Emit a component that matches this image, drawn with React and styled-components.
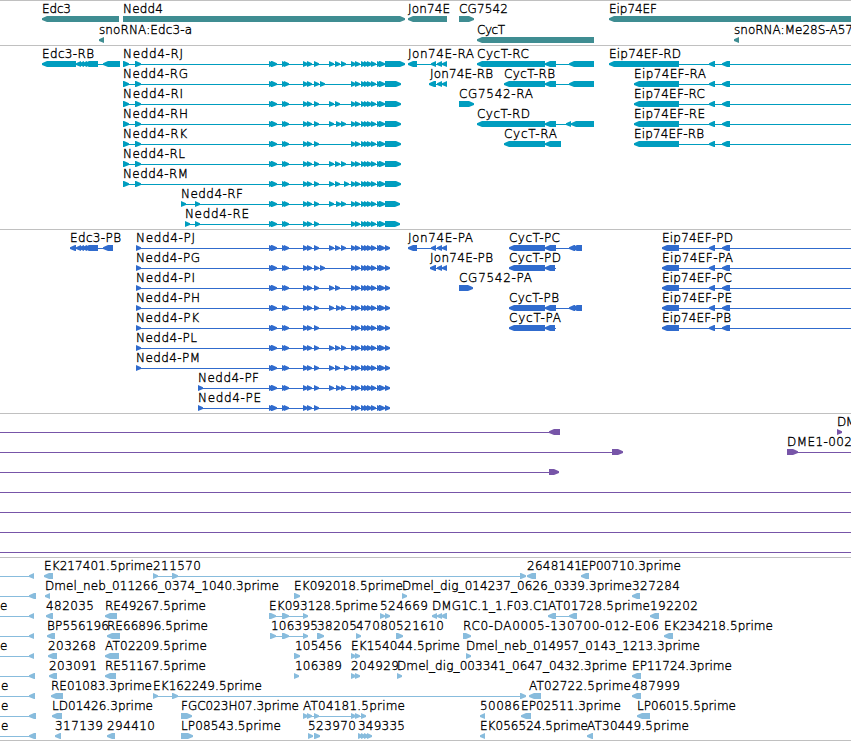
import styled, { createGlobalStyle } from "styled-components";

const GlobalStyle = createGlobalStyle`
  body {
    margin: 0;
    background: #fff;
    overflow: hidden;
  }
`;

// Whole browser view
const Viewer = styled.main`
  display: flex;
  flex-direction: column;
  width: 851px;
  height: 741px;
  overflow: hidden;
  background: #fff;
`;

// One annotation track
const Track = styled.section`
  box-sizing: border-box;
  flex: none;
  height: ${({ $height }) => $height}px;
  padding-top: 3px;
  border-top: 1px solid #c0c0c0;
  border-bottom: ${({ $last }) => ($last ? "1px solid #c0c0c0" : "none")};
  color: ${({ $color }) => $color};
`;

// One row of features inside a track
const Row = styled.svg`
  display: block;
  width: 851px;
  height: ${({ $pitch }) => $pitch}px;
  overflow: visible;
  fill: currentColor;
`;

const Label = styled.text`
  font-family: "DejaVu Sans", sans-serif;
  font-size: 12px;
  font-weight: 200;
  fill: #000;
  stroke: #000;
  stroke-width: 0.35px;
`;

const TOP = 12;
const HEAD = 5;

// Block with a pointed end, drawn in the strand's direction
const Exon = ({ from, to, left }) => {
  const head = Math.min(HEAD, to - from);
  const tipTop = TOP + 2.3;
  const tipEnd = TOP + 3.9;
  const end = TOP + 6;
  const points = left
    ? `${from},${tipTop} ${from + head},${TOP} ${to},${TOP} ${to},${end} ${from + head},${end} ${from},${tipEnd}`
    : `${to},${tipTop} ${to - head},${TOP} ${from},${TOP} ${from},${end} ${to - head},${end} ${to},${tipEnd}`;
  return <polygon points={points} />;
};

// Feature: [label, x, labelEnd, exons, strand, line]
const Feature = ({ data }) => {
  const [label, x, labelEnd, exons, strand, line] = data;
  return (
    <g>
      {line && (
        <rect x={line[0]} y={TOP + 3} width={line[1] - line[0]} height="1" shapeRendering="crispEdges" />
      )}
      {exons.map(([from, to]) => (
        <Exon key={from} from={from} to={to} left={strand === "-"} />
      ))}
      {label && (
        <Label x={x} y="9" textLength={labelEnd - x} lengthAdjust="spacing">
          {label}
        </Label>
      )}
    </g>
  );
};

// Exons shared by every Nedd4 isoform
const head = [[269, 274], [271, 277], [282, 287], [284, 289], [303, 308], [307, 312], [314, 319]];
const tail = [[351, 356], [355, 360], [361, 366], [364, 369], [367, 372], [371, 376], [377, 382], [379, 385]];

const nedd = (label, x, labelEnd, first, middle, last) => [
  label,
  x,
  labelEnd,
  [...first, ...head, ...middle.map((m) => [m, m + 5]), ...tail, [385, last]],
  "+",
  [x, last],
];

const rFirst = [[123, 129], [135, 141]];
const pFirst = [[136, 141]];
const jonTail = [[437, 442], [442, 447]];
const eipTail = [[709, 715], [722, 730]];

const genes = [
  [
    ["Edc3", 42, 71, [[42, 119]], "-"],
    ["Nedd4", 123, 163, [[123, 405]], "+"],
    ["Jon74E", 408, 450, [[408, 447]], "-"],
    ["CG7542", 459, 508, [[459, 474]], "+"],
    ["Eip74EF", 609, 657, [[609, 860]], "-"],
  ],
  [
    ["snoRNA:Edc3-a", 99, 192, [[99, 104]], "-"],
    ["CycT", 477, 505, [[477, 594]], "-"],
    ["snoRNA:Me28S-A57", 734, 853, [[734, 739]], "-"],
  ],
];

const transcripts = [
  [
    ["Edc3-RB", 42, 94, [[42, 76], [76, 81], [79, 84], [82, 87], [84, 98], [103, 120]], "-", [76, 104]],
    nedd("Nedd4-RJ", 123, 183, rFirst, [329, 335, 341], 405),
    ["Jon74E-RA", 408, 474, [[408, 417], [431, 436], ...jonTail], "-", [417, 447]],
    ["CycT-RC", 477, 529, [[477, 545], [545, 556], [569, 594]], "-", [556, 570]],
    ["Eip74EF-RD", 609, 681, [[609, 679], ...eipTail], "-", [679, 851]],
  ],
  [
    nedd("Nedd4-RG", 123, 188, rFirst, [320], 401),
    ["Jon74E-RB", 430, 493, [[429, 436], ...jonTail], "-", [429, 447]],
    ["CycT-RB", 504, 555, [[504, 545], [545, 556], [569, 594]], "-", [556, 570]],
    ["Eip74EF-RA", 634, 706, [[634, 679], ...eipTail], "-", [679, 851]],
  ],
  [
    nedd("Nedd4-RI", 123, 183, rFirst, [329, 335], 401),
    ["CG7542-RA", 459, 533, [[459, 474]], "+"],
    ["Eip74EF-RC", 634, 705, [[634, 679], ...eipTail], "-", [679, 851]],
  ],
  [
    nedd("Nedd4-RH", 123, 188, rFirst, [329, 336, 341], 401),
    ["CycT-RD", 477, 530, [[477, 545], [545, 556], [566, 571], [571, 594]], "-", [556, 572]],
    ["Eip74EF-RE", 634, 705, [[634, 679], ...eipTail], "-", [679, 851]],
  ],
  [
    nedd("Nedd4-RK", 123, 187, rFirst, [], 401),
    ["CycT-RA", 504, 557, [[504, 545], [545, 561]], "-"],
    ["Eip74EF-RB", 634, 704, [[634, 679], ...eipTail], "-", [679, 851]],
  ],
  [nedd("Nedd4-RL", 123, 185, rFirst, [329, 335, 341], 401)],
  [nedd("Nedd4-RM", 123, 188, rFirst, [329, 335, 344], 401)],
  [nedd("Nedd4-RF", 181, 243, [[181, 186], [195, 200]], [329, 336, 341], 400)],
  [nedd("Nedd4-RE", 185, 249, [[185, 190], [195, 200]], [], 400)],
];

const proteins = [
  [
    ["Edc3-PB", 70, 121, [[70, 76], [76, 81], [79, 84], [82, 87], [84, 98], [103, 113]], "-", [70, 104]],
    nedd("Nedd4-PJ", 136, 195, pFirst, [329, 335, 341], 390),
    ["Jon74E-PA", 408, 473, [[408, 417], [431, 436], ...jonTail], "-", [417, 447]],
    ["CycT-PC", 509, 560, [[509, 545], [545, 556], [569, 575], [572, 582]], "-", [556, 570]],
    ["Eip74EF-PD", 662, 733, [[662, 679], ...eipTail], "-", [679, 851]],
  ],
  [
    nedd("Nedd4-PG", 136, 200, pFirst, [320], 390),
    ["Jon74E-PB", 430, 493, [[430, 436], ...jonTail], "-", [430, 447]],
    ["CycT-PD", 509, 561, [[509, 545], [545, 555]], "-", [555, 556]],
    ["Eip74EF-PA", 662, 733, [[662, 679], ...eipTail], "-", [679, 851]],
  ],
  [
    nedd("Nedd4-PI", 136, 195, pFirst, [329, 335], 390),
    ["CG7542-PA", 459, 532, [[459, 473]], "+"],
    ["Eip74EF-PC", 662, 732, [[662, 679], ...eipTail], "-", [679, 851]],
  ],
  [
    nedd("Nedd4-PH", 136, 200, pFirst, [329, 336, 341], 390),
    ["CycT-PB", 509, 559, [[509, 545], [545, 556], [569, 575], [572, 582]], "-", [556, 570]],
    ["Eip74EF-PE", 662, 732, [[662, 679], ...eipTail], "-", [679, 851]],
  ],
  [
    nedd("Nedd4-PK", 136, 199, pFirst, [], 390),
    ["CycT-PA", 509, 561, [[509, 545], [545, 555]], "-", [555, 556]],
    ["Eip74EF-PB", 662, 731, [[662, 679], ...eipTail], "-", [679, 851]],
  ],
  [nedd("Nedd4-PL", 136, 197, pFirst, [329, 335, 341], 390)],
  [nedd("Nedd4-PM", 136, 200, pFirst, [329, 335, 344], 390)],
  [nedd("Nedd4-PF", 198, 259, [[198, 203]], [329, 336, 341], 390)],
  [nedd("Nedd4-PE", 198, 261, [[198, 203]], [], 390)],
];

const blank = ["", 0, 0, [], "+", [0, 851]];

const probes = [
  [
    ["", 0, 0, [[549, 560]], "-", [0, 550]],
    ["DM", 837, 856, [[837, 842]], "+"],
  ],
  [
    ["", 0, 0, [[612, 623]], "+", [0, 613]],
    ["DME1-002", 787, 852, [[787, 798]], "+", [797, 851]],
  ],
  [["", 0, 0, [[549, 559]], "+", [0, 550]]],
  [blank],
  [blank],
  [blank],
  [blank],
];

const edge = (to, label = "", x = 0) => [label, x, x + 7, [[29, to]], "-", [0, 30]];
const threeExons = [[282, 289], [303, 308]];

const ests = [
  [
    edge(34),
    ["EK217401.5prime", 44, 153, [[44, 53]], "-"],
    ["211570", 153, 201, [[153, 158], [172, 178], [520, 526]], "+", [153, 521]],
    ["2648141", 527, 582, [[527, 536]], "-"],
    ["EP00710.3prime", 581, 681, [[581, 589]], "-"],
  ],
  [
    edge(36),
    ["Dmel_neb_011266_0374_1040.3prime", 45, 279, [[45, 50]], "-"],
    ["EK092018.5prime", 294, 403, [[294, 300]], "+"],
    ["Dmel_dig_014237_0626_0339.3prime", 402, 632, [[402, 407]], "+"],
    ["327284", 632, 680, [[632, 640]], "-"],
  ],
  [
    edge(34, "e"),
    ["482035", 46, 94, [[46, 53]], "-"],
    ["RE49267.5prime", 105, 206, [[105, 117]], "-"],
    ["EK093128.5prime", 269, 378, [[269, 276], ...threeExons], "+", [269, 304]],
    ["524669", 380, 428, [[380, 385], [385, 390]], "+"],
    ["DMG1C.1_1.F03.C1", 432, 549, [[432, 437], [437, 442], [441, 447]], "-"],
    ["AT01728.5prime", 548, 650, [[548, 556], [569, 577]], "-", [556, 570]],
    ["192202", 650, 698, [[650, 659]], "-"],
  ],
  [
    edge(34),
    ["BP556196", 47, 109, [[47, 55]], "-"],
    ["RE66896.5prime", 107, 208, [[107, 120]], "-"],
    ["106395", 271, 318, [[270, 276], ...threeExons], "+", [270, 304]],
    ["38205", 317, 357, [[317, 324]], "+"],
    ["47080", 356, 396, [[356, 361]], "+"],
    ["521610", 396, 444, [[396, 403]], "+"],
    ["RC0-DA0005-130700-012-E06", 463, 659, [[463, 471]], "+"],
    ["EK234218.5prime", 664, 773, [[664, 673]], "-"],
  ],
  [
    edge(34, "e"),
    ["203268", 48, 96, [[48, 57]], "-"],
    ["AT02209.5prime", 105, 207, [[105, 119]], "-"],
    ["105456", 295, 342, [[294, 300]], "+"],
    ["EK154044.5prime", 351, 460, [[351, 356], [355, 360]], "+"],
    ["Dmel_neb_014957_0143_1213.3prime", 466, 700, [[466, 471]], "+"],
  ],
  [
    edge(35),
    ["203091", 49, 97, [[49, 57]], "-"],
    ["RE51167.5prime", 105, 206, [[105, 116]], "-"],
    ["106389", 295, 342, [[294, 299]], "+"],
    ["204929", 351, 399, [[351, 356], [355, 360]], "+"],
    ["Dmel_dig_003341_0647_0432.3prime", 397, 627, [[397, 402]], "+"],
    ["EP11724.3prime", 632, 732, [[632, 641]], "-"],
  ],
  [
    edge(35, "e", 1),
    ["RE01083.3prime", 51, 152, [[51, 63]], "-"],
    ["EK162249.5prime", 153, 262, [[153, 158], [172, 178], [520, 526]], "+", [153, 521]],
    ["AT02722.5prime", 529, 631, [[529, 541]], "-"],
    ["487999", 632, 680, [[632, 641]], "-"],
  ],
  [
    edge(36, "e", 1),
    ["LD01426.3prime", 52, 153, [[52, 62]], "-"],
    ["FGC023H07.3prime", 181, 299, [[181, 192]], "+"],
    ["AT04181.5prime", 303, 405, [[303, 308], [307, 312], [314, 319], [351, 356], [355, 360], [361, 366]], "+", [303, 362]],
    ["50086", 480, 520, [[480, 485]], "-"],
    ["EP02511.3prime", 521, 621, [[521, 531]], "-"],
    ["LP06015.5prime", 637, 736, [[637, 650]], "-"],
  ],
  [
    edge(36, "e", 1),
    ["317139", 55, 103, [[55, 61]], "-"],
    ["294410", 107, 155, [[107, 115]], "-"],
    ["LP08543.5prime", 181, 281, [[181, 193]], "+"],
    ["523970", 308, 356, [[308, 313], [314, 320]], "+"],
    ["349335", 358, 405, [[358, 363], [361, 366], [364, 369], [367, 372]], "+"],
    ["EK056524.5prime", 480, 588, [[480, 485]], "-"],
    ["AT30449.5prime", 587, 689, [[587, 593]], "-"],
  ],
];

const tracks = [
  { name: "genes", color: "#3f8d92", height: 45, pitch: 21, rows: genes },
  { name: "transcripts", color: "#009dbf", height: 184, pitch: 20, rows: transcripts },
  { name: "proteins", color: "#306bcd", height: 184, pitch: 20, rows: proteins },
  { name: "probes", color: "#7755a8", height: 144, pitch: 20, rows: probes },
  { name: "ests", color: "#88bcdd", height: 184, pitch: 20, rows: ests, last: true },
];

const App = () => {
  return (
    <>
      <GlobalStyle />
      <Viewer>
        {tracks.map(({ name, color, height, pitch, rows, last }) => (
          <Track key={name} $color={color} $height={height} $last={last}>
            {rows.map((features, i) => (
              <Row key={i} $pitch={pitch}>
                {features.map((data, j) => (
                  <Feature key={j} data={data} />
                ))}
              </Row>
            ))}
          </Track>
        ))}
      </Viewer>
    </>
  );
};

export default App;
